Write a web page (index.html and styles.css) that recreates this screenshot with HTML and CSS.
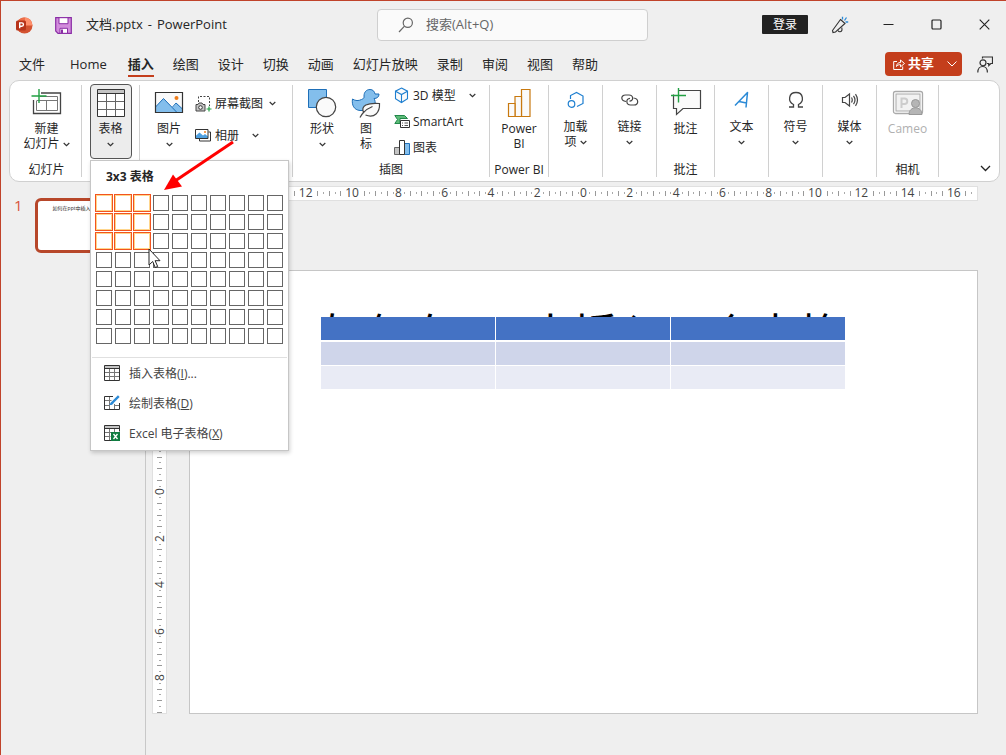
FILE: index.html
```html
<!DOCTYPE html>
<html lang="zh-CN">
<head>
<meta charset="utf-8">
<title>文档.pptx - PowerPoint</title>
<link rel="stylesheet" href="styles.css">
</head>
<body>
<svg class="defs" aria-hidden="true">
  <symbol id="chev" viewBox="0 0 7 5"><path d="M.7 1l2.8 2.6L6.300 1" fill="none" stroke="#333" stroke-width="1.200"/></symbol>
</svg>
<div class="app">
  <header class="titlebar">
    <div class="doc">
      <svg class="logo" width="17" height="17" viewBox="0 0 17 17" aria-hidden="true">
        <circle cx="8.500" cy="8.500" r="8" fill="#d35230"/>
        <path d="M8.500.5a8 8 0 0 1 8 8h-8z" fill="#ff8f6b"/>
        <path d="M.5 8.500a8 8 0 0 1 8-8v8z" fill="#ed6c47"/>
        <rect x="0" y="3.500" width="10" height="10" rx="1.500" fill="#b7341a"/>
        <path d="M3.700 11.300V5.900h2.100a1.600 1.600 0 0 1 0 3.300H3.700" fill="none" stroke="#fff" stroke-width="1.400"/>
      </svg>
      <button class="plain" aria-label="保存">
        <svg width="17" height="17" viewBox="0 0 17 17"><path d="M.7.7h15.600v15.600H3L.7 14z" fill="#d28cdc" stroke="#8a2da5" stroke-width="1.200"/><path d="M4 .7h9v6H4zM5 16.300v-5h7.500v5z" fill="#fff" stroke="#8a2da5"/><path d="M6 12.500h2V16H6z" fill="#8a2da5"/></svg>
      </button>
      <span class="doc-name"><span>文档.pptx</span><span>-</span><span>PowerPoint</span></span>
    </div>
    <label class="search">
      <svg width="16" height="16" viewBox="0 0 16 16" fill="none" stroke="#666" stroke-width="1.200" aria-hidden="true"><circle cx="9.800" cy="5.800" r="4.600"/><path d="M6.500 9.200L1 15"/></svg>
      <input type="text" placeholder="搜索(Alt+Q)" aria-label="搜索">
    </label>
    <div class="window-tools">
      <button class="login">登录</button>
      <button class="win" aria-label="画笔"><svg width="18" height="18" viewBox="0 0 18 18" fill="none" stroke="#333" stroke-width="1.100"><path d="M9.500 3.500l4.500 4L4.500 16l-2.500.5-.5-2z"/><path d="M7 14.500c1 2 3.500 1.500 4-.5l-.2-2.500"/><path d="M11.500 3.500V.8M13.500 4.500l2-3M14.500 6h2.700" stroke="#2b8ad6" stroke-width="1.300"/></svg></button>
      <button class="win" aria-label="最小化"><svg width="11" height="11" viewBox="0 0 11 11"><path d="M.5 5.500h10" stroke="#222"/></svg></button>
      <button class="win" aria-label="最大化"><svg width="11" height="11" viewBox="0 0 11 11"><rect x="1" y="1" width="9" height="9" rx="1" fill="none" stroke="#222" stroke-width="1.200"/></svg></button>
      <button class="win" aria-label="关闭"><svg width="11" height="11" viewBox="0 0 11 11"><path d="M.7.7l9.600 9.600M10.300.7L.7 10.300" stroke="#222" stroke-width="1.100"/></svg></button>
    </div>
  </header>

  <nav class="tabs">
    <button class="tab">文件</button>
    <button class="tab home">Home</button>
    <button class="tab active">插入</button>
    <button class="tab">绘图</button>
    <button class="tab">设计</button>
    <button class="tab">切换</button>
    <button class="tab">动画</button>
    <button class="tab">幻灯片放映</button>
    <button class="tab">录制</button>
    <button class="tab">审阅</button>
    <button class="tab">视图</button>
    <button class="tab">帮助</button>
    <button class="share">
      <svg width="12" height="12" viewBox="0 0 12 12" fill="none" stroke="#fff"><path d="M4 3.500H.7v8h9V8.500"/><path d="M3.500 8.500c.2-2.500 1.500-4 4-4V2l4 3.500-4 3.300V6.600c-1.800 0-3 .5-4 1.900z"/></svg>
      <span>共享</span>
      <svg class="share-more" width="10" height="6" viewBox="0 0 10 6" fill="none" stroke="#fff"><path d="M.5.5L5 5 9.500.5"/></svg>
    </button>
    <button class="plain" aria-label="批注窗格">
      <svg width="16" height="17" viewBox="0 0 16 17" fill="none" stroke="#333" stroke-width="1.200"><path d="M5.500 2.500V1h10v6.500h-1.700l-2 2V7.500H10"/><circle cx="6" cy="6.800" r="3"/><path d="M.8 16.500c0-8 9.600-8 9.600 0"/></svg>
    </button>
  </nav>

  <section class="ribbon">
    <div class="group w72">
      <button class="big"><svg width="32" height="31" viewBox="0 0 32 31" fill="none"><path d="M10 5h19.500v20.500h-27V12" stroke="#444" stroke-width="1.300"/><path d="M9 8.500h17.500v14h-21V13M5.500 12.500h21M15.500 12.500v10" stroke="#777"/><path d="M8 1v14M.5 8h15" stroke="#22a043" stroke-width="1.400"/></svg>
        <span>新建</span><span>幻灯片 <svg class="chev"><use href="#chev"/></svg></span></button>
      <div class="group-name">幻灯片</div>
    </div>
    <div class="group w58">
      <button class="big pressed"><svg width="30" height="31" viewBox="0 0 30 31" fill="none"><path d="M1.500 1.500h27v27h-27z" fill="#fff"/><path d="M1.500 1.500h27v4h-27z" fill="#c4c4c4"/><path d="M10.500 5.500v23M19.500 5.500v23M1.500 13.500h27M1.500 21.500h27" stroke="#666"/><path d="M1.500 1.500h27v27h-27zM1.500 5.500h27" stroke="#333"/></svg>
        <span>表格</span><span><svg class="chev"><use href="#chev"/></svg></span></button>
      <div class="popup">
        <div class="popup-title">3x3 表格</div>
        <div class="cells">
          <i class="on"></i><i class="on"></i><i class="on"></i><i></i><i></i><i></i><i></i><i></i><i></i><i></i>
          <i class="on"></i><i class="on"></i><i class="on"></i><i></i><i></i><i></i><i></i><i></i><i></i><i></i>
          <i class="on"></i><i class="on"></i><i class="on"></i><i></i><i></i><i></i><i></i><i></i><i></i><i></i>
          <i></i><i></i><i></i><i></i><i></i><i></i><i></i><i></i><i></i><i></i>
          <i></i><i></i><i></i><i></i><i></i><i></i><i></i><i></i><i></i><i></i>
          <i></i><i></i><i></i><i></i><i></i><i></i><i></i><i></i><i></i><i></i>
          <i></i><i></i><i></i><i></i><i></i><i></i><i></i><i></i><i></i><i></i>
          <i></i><i></i><i></i><i></i><i></i><i></i><i></i><i></i><i></i><i></i>
        </div>
        <div class="popup-menu">
          <button><svg width="16" height="16" viewBox="0 0 16 16" fill="none"><path d="M.5.5h15v3H.5z" fill="#c4c4c4"/><path d="M5.500 3v12M10.500 3v12M.5 7.500h15M.5 11.500h15" stroke="#777"/><path d="M.5.5h15v15H.5zM.5 3.500h15" stroke="#333"/></svg><span>插入表格(<u>I</u>)...</span></button>
          <button><svg width="16" height="16" viewBox="0 0 16 16" fill="none"><path d="M5.500 1v14M10.500 9v6M.5 5.500h7M.5 10.500h5M10 10.500h5" stroke="#777"/><path d="M9 1.500H.5v13h15V8" stroke="#333"/><path d="M14.800 1.200L8.500 7.500" stroke="#2b8ad6" stroke-width="2.400"/><path d="M8.200 6.500c-1.800.2-1.500 2-3 3.500 2 .3 4-.2 4.500-2.200z" fill="#2b8ad6"/></svg><span>绘制表格(<u>D</u>)</span></button>
          <button><svg width="16" height="16" viewBox="0 0 16 16" fill="none"><path d="M.5.5h15v3H.5z" fill="#c4c4c4"/><path d="M5.500 3v12M10.500 3v4M.5 7.500h7M.5 11.500h6" stroke="#777"/><path d="M7 15.500H.5V.5h15v6M.5 3.500h15" stroke="#333"/><rect x="7" y="7" width="9" height="9" fill="#107c41"/><path d="M9.500 9l4 5M13.500 9l-4 5" stroke="#fff" stroke-width="1.300"/></svg><span>Excel 电子表格(<u>X</u>)</span></button>
        </div>
        <svg class="arrow" width="80" height="60" viewBox="0 0 80 60" aria-hidden="true"><path d="M75 4L17 43" stroke="#f00" stroke-width="3"/><path d="M6 52l9-15.500 9 12z" fill="#f00"/></svg>
        <svg class="pointer" width="13" height="21" viewBox="0 0 13 21" aria-hidden="true"><path d="M1 1v16l3.700-3.500 2.500 6 2.500-1-2.600-5.800H12z" fill="#fff" stroke="#222"/></svg>
      </div>
    </div>
    <div class="group w153">
      <div class="tools">
        <button class="big"><svg width="30" height="31" viewBox="0 0 30 31"><path d="M1.500 4.500h27v20h-27z" fill="#fafafa"/><path d="M1.500 19l8-8.500 9 9 4-4.500 6 6v3.500h-27z" fill="#83beec"/><path d="M1.500 19l8-8.500 13.500 14M18.500 19l3.500-4 6.500 6" fill="none" stroke="#1e6fb8"/><circle cx="22.500" cy="10" r="2" fill="#ee7d1b"/><path d="M1.500 4.500h27v20h-27z" fill="none" stroke="#333" stroke-width="1.200"/></svg>
          <span>图片</span><span><svg class="chev"><use href="#chev"/></svg></span></button>
        <div class="stack two">
          <button class="row"><svg width="17" height="17" viewBox="0 0 17 17" fill="none"><path d="M3.500 7V1.500h11V11" stroke="#444" stroke-dasharray="2 1.500"/><path d="M1 9.500h2l1-1.500h3l1 1.500h2v6.500H1z" fill="#c4c4c4" stroke="#444"/><circle cx="5.500" cy="12.500" r="1.800" stroke="#333" fill="#fff"/><path d="M14 11.500v5M11.500 14h5" stroke="#22a043" stroke-width="1.200"/></svg><span>屏幕截图</span><svg class="chev"><use href="#chev"/></svg></button>
          <button class="row wide"><svg width="17" height="17" viewBox="0 0 17 17" fill="none"><path d="M13.500 5h2v9h-11v-2.500" stroke="#333"/><path d="M.5 2.500h12.500v9H.5z" fill="#fff"/><path d="M.5 9l4-3.500 3.500 3L10 7l3 2.500v2H.5z" fill="#4fa0e0"/><circle cx="10" cy="5" r="1" fill="#ee7d1b"/><path d="M.5 2.500h12.500v9H.5z" stroke="#333"/></svg><span>相册</span><svg class="chev"><use href="#chev"/></svg></button>
        </div>
      </div>
    </div>
    <div class="group w197">
      <div class="tools art">
        <button class="big"><svg width="30" height="31" viewBox="0 0 30 31"><path d="M1.500 1.500h18v18h-18z" fill="#83beec" stroke="#1e6fb8"/><circle cx="19" cy="19" r="9.700" fill="#fafafa" stroke="#444" stroke-width="1.200"/></svg>
          <span>形状</span><span><svg class="chev"><use href="#chev"/></svg></span></button>
        <button class="big"><svg width="30" height="31" viewBox="0 0 30 31"><path d="M1.500 11c3 2 6 2 9 .5 2-1 3-1.500 2.500-3.500C13 4 15.500 1.500 19 1.500c3 0 4.500 2 5 4.500h4c0 3-2 4.500-5 4.500 2 3 2 10-4 12H9C3 22 .5 17 1.500 11z" fill="#83beec" stroke="#1e6fb8"/><path d="M9 29.500c1-2 2-3.500 3.500-5-3-7 4-10 16-9 .5 9-5 15-14 11.500M11.500 25.500c3-3.500 6-5.500 10-7" fill="#fafafa" stroke="#444" stroke-width="1.200"/></svg>
          <span>图</span><span>标</span></button>
        <div class="stack three">
          <button class="row model"><svg width="16" height="17" viewBox="0 0 16 17" fill="#fafafa" stroke="#1e7fd0" stroke-width="1.100"><path d="M7.500 1l6 3.200v7.600l-6 3.700-6-3.700V4.200z"/><path d="M1.500 4.200l6 3.300 6-3.300M7.500 7.500v8" fill="none"/></svg><span>3D 模型</span><svg class="chev"><use href="#chev"/></svg></button>
          <button class="row"><svg width="16" height="17" viewBox="0 0 16 17" fill="none"><path d="M.8 2.500h9.700l3 3H6v5H.8l2.700-4z" fill="#5dbb78" stroke="#22884a"/><path d="M6.500 7.500h9v7h-9z" fill="#fff" stroke="#333"/><path d="M8 10h1M8 12.500h1M10.500 10h3.500M10.500 12.500h3.500" stroke="#555"/></svg><span>SmartArt</span></button>
          <button class="row"><svg width="16" height="17" viewBox="0 0 16 17"><path d="M.5 8.500h5v7h-5z" fill="#c4c4c4" stroke="#666"/><path d="M10.500 4.500h5v11h-5z" fill="#83beec" stroke="#1e6fb8"/><path d="M5.500 1.500h5v14h-5z" fill="#fff" stroke="#333"/></svg><span>图表</span></button>
        </div>
      </div>
      <div class="group-name">插图</div>
    </div>
    <div class="group w59">
      <button class="big"><svg width="30" height="31" viewBox="0 0 30 31" fill="#fafafa" stroke="#c8790f" stroke-width="1.200"><path d="M17.500 1.500h8.500v27h-8.500z"/><path d="M11 8.500h6.500v20H11z"/><path d="M4.500 15.500H11v13H4.500z"/></svg>
        <span>Power</span><span>BI</span></button>
      <div class="group-name">Power BI</div>
    </div>
    <div class="group w54">
      <button class="big small"><svg width="18" height="18" viewBox="0 0 18 18" fill="none" stroke="#1e7fd0" stroke-width="1.200"><circle cx="4.500" cy="13" r="3.300"/><path d="M3.500 8V4.500L9.500 1.500l6.500 3.500v7.500l-6 3"/></svg>
        <span>加载</span><span>项 <svg class="chev"><use href="#chev"/></svg></span></button>
    </div>
    <div class="group w54">
      <button class="big small"><svg width="18" height="18" viewBox="0 0 18 18" fill="none" stroke="#444" stroke-width="1.200"><path d="M5 10.500C-.5 10-.5 4 4.500 4H8c4.500 0 5 6 .5 6.200"/><path d="M12.500 7c5.500.5 5.500 7 .5 7H9.500C5 14 4.500 7.500 9 7.300"/></svg>
        <span>链接</span><span><svg class="chev"><use href="#chev"/></svg></span></button>
    </div>
    <div class="group w58">
      <button class="big"><svg width="32" height="31" viewBox="0 0 32 31"><path d="M3.500 2.500h27v18H13l-6.500 6v-6h-3z" fill="#fafafa" stroke="#444" stroke-width="1.200"/><path d="M1 .5h7v6H1z" fill="#fff"/><path d="M8.500 0v14.500M1 7.500h15" stroke="#22a043" stroke-width="1.400"/></svg>
        <span>批注</span></button>
      <div class="group-name">批注</div>
    </div>
    <div class="group w54">
      <button class="big small"><svg width="18" height="18" viewBox="0 0 18 18" fill="none" stroke="#2b8ad6" stroke-width="1.500" stroke-linejoin="round"><path d="M2 14.500L14.500 1.500 13 16.500M6 10.500l7.500 1.500"/></svg>
        <span>文本</span><span><svg class="chev"><use href="#chev"/></svg></span></button>
    </div>
    <div class="group w54">
      <button class="big small"><svg width="18" height="18" viewBox="0 0 18 18" fill="none" stroke="#444" stroke-width="1.300"><path d="M2 16h4.500v-2.500C.5 10.500 1.500 1.500 9 1.500s8.500 9 2.500 12V16H16"/></svg>
        <span>符号</span><span><svg class="chev"><use href="#chev"/></svg></span></button>
    </div>
    <div class="group w54">
      <button class="big small"><svg width="18" height="18" viewBox="0 0 18 18" fill="none" stroke="#444" stroke-width="1.200"><path d="M1.500 6.500H4L8.500 3v12L4 11.500H1.500z"/><path d="M10.500 6.500q1.500 2.500 0 5M12.500 4.800q3 4.200 0 8.400M14.500 3.200q4 5.800 0 11.600"/></svg>
        <span>媒体</span><span><svg class="chev"><use href="#chev"/></svg></span></button>
    </div>
    <div class="group w62">
      <button class="big" disabled><svg width="32" height="31" viewBox="0 0 32 31" fill="none" stroke="#aaa"><rect x="1.500" y="3.500" width="29" height="22" rx="2" stroke-width="1.300"/><rect x="4" y="6" width="24" height="17" fill="#f2f2f2"/><path d="M9.500 20v-9.500h3a2.600 2.600 0 0 1 0 5.500h-3" stroke="#ccc" stroke-width="2"/><circle cx="23.500" cy="15.500" r="4" fill="#b5b5b5" stroke="#999"/><path d="M17 26.500c0-9 13-9 13 0z" fill="#b5b5b5" stroke="#999"/></svg>
        <span>Cameo</span></button>
      <div class="group-name">相机</div>
    </div>
    <button class="plain collapse" aria-label="折叠功能区"><svg width="11" height="7" viewBox="0 0 11 7" fill="none" stroke="#222" stroke-width="1.300"><path d="M1 1l4.500 4.500L10 1"/></svg></button>
  </section>

  <main class="workspace">
    <aside class="thumbs">
      <span class="thumb-no">1</span>
      <div class="thumb">如何在ppt中插入一个表格</div>
    </aside>
    <section class="editor">
      <div class="ruler-h"><div class="scale"><span>16</span><span>14</span><span>12</span><span>10</span><span>8</span><span>6</span><span>4</span><span>2</span><span>0</span><span>2</span><span>4</span><span>6</span><span>8</span><span>10</span><span>12</span><span>14</span><span>16</span></div></div>
      <div class="ruler-v"><span><b>8</b></span><span><b>6</b></span><span><b>4</b></span><span><b>2</b></span><span><b>0</b></span><span><b>2</b></span><span><b>4</b></span><span><b>6</b></span><span><b>8</b></span></div>
      <article class="slide">
        <h1>如何在ppt中插入一个表格</h1>
        <table>
          <tr><th></th><th></th><th></th></tr>
          <tr><td></td><td></td><td></td></tr>
          <tr class="light"><td></td><td></td><td></td></tr>
        </table>
      </article>
    </section>
  </main>
</div>
</body>
</html>
```
FILE: styles.css
```css
* { box-sizing: border-box; }

body {
  margin: 0;
  background: #efefef;
  color: #262626;
  font: 12px/15px "Open Sans", "Noto Sans CJK SC", sans-serif;
}

button {
  margin: 0;
  padding: 0;
  border: 0;
  background: none;
  color: inherit;
  font: inherit;
}

svg { display: block; flex: none; }
.defs { position: absolute; width: 0; height: 0; }
.chev { display: inline-block; width: 7px; height: 5px; vertical-align: middle; }

.app {
  display: flex;
  flex-direction: column;
  min-height: 100vh;
  border-top: 1px solid #c0432a;
  border-left: 1px solid #c0432a;
}

/* Title bar */
.titlebar {
  display: grid;
  grid-template-columns: minmax(0, 21fr) 271px minmax(0, 20fr);
  align-items: center;
  height: 48px;
}
.doc { display: flex; align-items: center; padding-left: 15px; white-space: nowrap; }
.doc .plain { margin: 0 14px 0 22px; }
.doc-name { display: flex; gap: 5px; padding-bottom: 2px; font-size: 13px; }
.search {
  display: flex;
  align-items: center;
  gap: 12px;
  height: 32px;
  padding-left: 20px;
  border: 1px solid #cfcfcf;
  border-radius: 4px;
  background: #fafafa;
}
.search input {
  flex: 1;
  min-width: 0;
  padding: 0 0 2px;
  border: 0;
  outline: 0;
  background: none;
  font: inherit;
  font-size: 13px;
}
.search input::placeholder { color: #666; opacity: 1; }
.window-tools { display: flex; justify-content: flex-end; align-items: center; gap: 4px; padding-bottom: 1px; }
.login {
  width: 46px;
  height: 19px;
  margin-right: 6px;
  border-radius: 1px;
  background: #222;
  color: #fff;
}
.win { display: grid; place-items: center; width: 44px; height: 30px; }

/* Ribbon tabs */
.tabs {
  display: flex;
  align-items: center;
  gap: 19px;
  height: 31px;
  padding: 0 13px 1px 18px;
  font-size: 13px;
}
.tab { height: 26px; padding-top: 2px; border-bottom: 2px solid transparent; white-space: nowrap; }
.tab.home { padding: 2px 2px 0 6px; }
.tab.active { border-color: #c43e1c; font-weight: 700; }
.share {
  display: flex;
  align-items: center;
  gap: 3px;
  width: 77px;
  height: 24px;
  margin-left: auto;
  padding: 0 5px 0 8px;
  border-radius: 4px;
  background: #c43e1c;
  color: #fff;
  font-weight: 700;
}
.share span { padding-bottom: 2px; }
.share-more { margin-left: auto; }
.share + .plain { margin-left: -4px; }

/* Ribbon */
.ribbon {
  display: flex;
  height: 102px;
  margin: 0 6px 0 8px;
  padding: 4px 0;
  border: 1px solid #d0d0d0;
  border-radius: 10px;
  background: #fff;
}
.group {
  display: flex;
  flex-direction: column;
  align-items: center;
  flex: none;
  position: relative;
  border-right: 1px solid #d0d0d0;
}
.w54 { width: 54px; }
.w58 { width: 58px; }
.w59 { width: 59px; }
.w62 { width: 62px; }
.w72 { width: 72px; padding-left: 2px; }
.w153 { width: 153px; }
.w197 { width: 197px; }
.group-name { margin-top: auto; line-height: 14px; white-space: nowrap; }
.big {
  display: flex;
  flex-direction: column;
  align-items: center;
  width: 42px;
  height: 75px;
  padding-top: 3px;
  white-space: nowrap;
}
.big > svg { margin-bottom: 2px; }
.big.small > svg { height: 24px; margin-bottom: 7px; }
.big:disabled { color: #b0b0b0; }
.w72 .big, .w62 .big { width: 60px; }
.pressed {
  margin-top: -1px;
  border: 1px solid #555;
  border-radius: 4px;
  background: #ececec;
}
.tools { display: flex; width: 100%; padding-left: 8px; }
.tools.art { gap: 2px; }
.stack { display: flex; flex-direction: column; }
.two { gap: 15px; padding: 10px 0 0 5px; }
.three { gap: 9px; padding: 2px 0 0 5px; }
.row { display: flex; align-items: center; gap: 3px; height: 17px; white-space: nowrap; }
.row .chev { margin-left: 3px; }
.row.wide .chev, .row.model .chev { margin-left: 10px; }
.collapse { margin: auto 8px 5px auto; }

/* Table size popup */
.popup {
  position: absolute;
  top: 75px;
  left: 8px;
  z-index: 5;
  width: 199px;
  border: 1px solid #c6c6c6;
  background: #fff;
  box-shadow: 1px 2px 4px rgba(0, 0, 0, .18);
}
.popup-title { padding: 8px 15px 11px; font-weight: 700; }
.cells { display: grid; grid-template-columns: repeat(10, 16px); gap: 3px; padding: 0 5px 13px; }
.cells i { height: 16px; border: 1px solid #666; }
.cells i.on { border-color: #ffd68c; box-shadow: 0 0 0 1px #f2541f; }
.popup-menu { margin: 0 1px; border-top: 1px solid #e0e0e0; }
.popup-menu button {
  display: flex;
  align-items: center;
  gap: 9px;
  width: 100%;
  height: 30px;
  padding-left: 12px;
  color: #444;
}
.popup-menu button:last-child { margin-bottom: 2px; }
.arrow { position: absolute; top: -23px; left: 67px; }
.pointer { position: absolute; top: 87px; left: 57px; }

/* Workspace */
.workspace { display: flex; flex: 1; }
.thumbs {
  display: flex;
  align-items: flex-start;
  gap: 12px;
  width: 145px;
  padding: 16px 0 0 13px;
  border-right: 1px solid #c8c8c8;
}
.thumb-no { color: #d9533a; font-size: 15px; }
.thumb {
  width: 98px;
  height: 55px;
  padding: 0 0 0 15px;
  border: 3px solid #b7472a;
  border-radius: 6px;
  background: #fff;
  font-size: 5px;
  white-space: nowrap;
}
.editor {
  display: grid;
  flex: 1;
  grid-template-columns: 15px minmax(0, 1fr);
  grid-template-rows: 15px auto;
  gap: 69px 22px;
  align-content: start;
  padding: 4px 28px 36px 6px;
}
.ruler-h, .ruler-v {
  border: 1px solid #e0e0e0;
  background: #fff;
  color: #444;
}
.ruler-h { grid-column: 2; }
.scale {
  display: grid;
  grid-template-columns: repeat(17, 1fr);
  background:
    repeating-linear-gradient(90deg, #999 0 1px, transparent 1px calc(100% / 68)) 0 50% / 100% 5px no-repeat,
    repeating-linear-gradient(90deg, transparent 0 calc(100% / 136), #aaa calc(100% / 136) calc(100% / 136 + 1px), transparent calc(100% / 136 + 1px) calc(100% / 68)) 0 50% / 100% 2px no-repeat;
  line-height: 12px;
}
.scale span { justify-self: center; background: #fff; }
.ruler-v {
  display: flex;
  flex-direction: column;
  justify-content: center;
  background:
    repeating-linear-gradient(180deg, #999 0 1px, transparent 1px 2.625%) 50% 0 / 5px 100% no-repeat,
    repeating-linear-gradient(180deg, transparent 0 1.3125%, #aaa 1.3125% calc(1.3125% + 1px), transparent calc(1.3125% + 1px) 2.625%) 50% 0 / 2px 100% no-repeat,
    #fff;
}
.ruler-v span { display: grid; place-items: center; height: 10.5%; }
.ruler-v b {
  background: #fff;
  font-weight: 400;
  line-height: 13px;
  writing-mode: vertical-rl;
  transform: rotate(180deg);
}
.slide {
  position: relative;
  aspect-ratio: 16 / 9;
  border: 1px solid #c6c6c6;
  background: #fff;
}
.slide h1 {
  margin: 0;
  padding: 34px 0 0 131px;
  color: #000;
  font: 400 45px/56px "Noto Sans CJK SC", sans-serif;
  white-space: nowrap;
}
.slide table {
  position: absolute;
  top: 46px;
  left: 131px;
  width: 525px;
  border-spacing: 0;
  border-collapse: separate;
  table-layout: fixed;
}
.slide th, .slide td { height: 24px; padding: 0; border-right: 1px solid #fff; border-bottom: 1px solid #fff; background: #cfd5ea; }
.slide th { height: 25px; border-bottom-width: 2px; background: #4472c4; }
.slide .light td { background: #e9ebf5; }
```
